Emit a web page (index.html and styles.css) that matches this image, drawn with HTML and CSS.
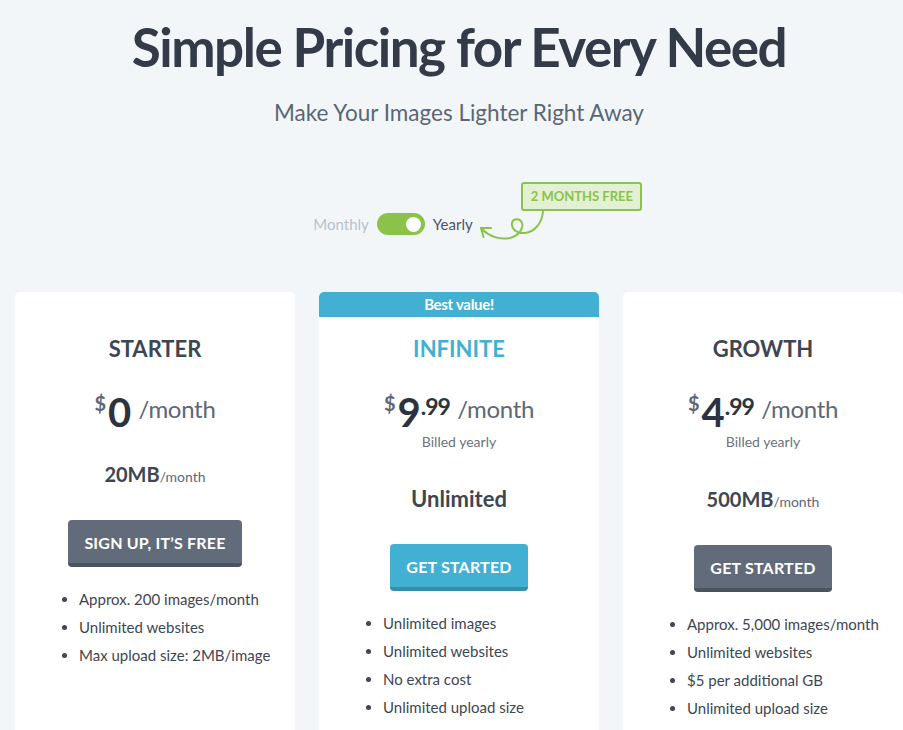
FILE: index.html
```html
<!DOCTYPE html>
<html lang="en">
<head>
<meta charset="utf-8">
<title>Pricing</title>
<link rel="stylesheet" href="styles.css">
</head>
<body>
<header class="hero">
  <h1 class="title">Simple Pricing for Every Need</h1>
  <p class="subtitle">Make Your Images Lighter Right Away</p>
  <div class="billing">
    <div class="toggle">
      <span class="opt opt-off">Monthly</span>
      <span class="switch"><span class="knob"></span></span>
      <span class="opt opt-on">Yearly</span>
      <span class="promo">2 MONTHS FREE</span>
      <svg class="curl" width="74" height="34" viewBox="0 0 74 34" fill="none" stroke="#8bc34a" stroke-width="2" stroke-linecap="round" stroke-linejoin="round">
        <path d="M68,3 C67,16 59,24 50,25 C41,26 36,20 37,15 C38,10 45,10 47,15 C49,21 43,28 35,30 C26,32 14,29 6,20"/>
        <path d="M6,20 L16,20 M6,20 L8.5,29"/>
      </svg>
    </div>
  </div>
</header>

<main class="plans">
  <section class="card">
    <h2 class="plan">STARTER</h2>
    <div class="price"><span class="cur">$</span><span class="num">0</span> <span class="per">/month</span></div>
    <div class="quota"><span class="amt">20MB</span><span class="unit">/month</span></div>
    <a class="btn btn-gray">SIGN UP, IT’S FREE</a>
    <ul class="features">
      <li>Approx. 200 images/month</li>
      <li>Unlimited websites</li>
      <li>Max upload size: 2MB/image</li>
    </ul>
  </section>

  <section class="card card-featured">
    <div class="ribbon">Best value!</div>
    <h2 class="plan plan-blue">INFINITE</h2>
    <div class="price"><span class="cur">$</span><span class="num">9</span><span class="cents">.99</span> <span class="per">/month</span></div>
    <div class="billed">Billed yearly</div>
    <div class="quota"><span class="amt amt-lg">Unlimited</span></div>
    <a class="btn btn-blue">GET STARTED</a>
    <ul class="features">
      <li>Unlimited images</li>
      <li>Unlimited websites</li>
      <li>No extra cost</li>
      <li>Unlimited upload size</li>
    </ul>
  </section>

  <section class="card">
    <h2 class="plan">GROWTH</h2>
    <div class="price"><span class="cur">$</span><span class="num">4</span><span class="cents">.99</span> <span class="per">/month</span></div>
    <div class="billed">Billed yearly</div>
    <div class="quota"><span class="amt">500MB</span><span class="unit">/month</span></div>
    <a class="btn btn-gray">GET STARTED</a>
    <ul class="features">
      <li>Approx. 5,000 images/month</li>
      <li>Unlimited websites</li>
      <li>$5 per additional GB</li>
      <li>Unlimited upload size</li>
    </ul>
  </section>
</main>
</body>
</html>
```

FILE: styles.css
```css
html {
  overflow: hidden;
}

body {
  margin: 0;
  background: #f3f6f9;
  font-family: "Lato", "Open Sans", sans-serif;
  color: #3e4654;
}

.hero {
  padding-top: 13px;
  padding-left: 15px;
  text-align: center;
}

.title {
  margin: 0;
  font-size: 53px;
  line-height: 68px;
  font-weight: 700;
  color: #333a48;
  letter-spacing: -1.5px;
}

.subtitle {
  margin: 17px 0 0;
  font-size: 22.5px;
  line-height: 30px;
  color: #5a6676;
}

.billing {
  display: flex;
  justify-content: center;
  padding-right: 132px;
  margin-top: 84px;
}

.toggle {
  position: relative;
  display: flex;
  align-items: center;
  gap: 8px;
  height: 24px;
}

.opt {
  font-size: 15px;
  line-height: 24px;
}

.opt-off {
  color: #b9c2cc;
}

.opt-on {
  color: #4a5363;
}

.switch {
  display: flex;
  align-items: center;
  justify-content: flex-end;
  width: 48px;
  height: 22px;
  padding: 0 4px;
  box-sizing: border-box;
  border-radius: 11px;
  background: #8bc34a;
}

.knob {
  width: 15px;
  height: 15px;
  border-radius: 50%;
  background: #fff;
}

.promo {
  position: absolute;
  left: 208px;
  top: -30px;
  width: 121px;
  height: 29px;
  box-sizing: border-box;
  border: 2px solid #8bc34a;
  border-radius: 3px;
  background: #e3f0d4;
  color: #8bc34a;
  font-size: 13px;
  font-weight: 700;
  line-height: 25px;
  white-space: nowrap;
}

.curl {
  position: absolute;
  left: 162px;
  top: -4px;
}

.plans {
  display: grid;
  grid-template-columns: repeat(3, 280px);
  gap: 24px;
  padding-left: 15px;
  margin-top: 56px;
}

.card {
  background: #fff;
  border-radius: 5px;
  padding: 41px 0 60px;
  text-align: center;
}

.card-featured {
  padding-top: 0;
}

.ribbon {
  height: 25px;
  margin-bottom: 16px;
  border-radius: 5px 5px 0 0;
  background: #42b0d3;
  color: #fff;
  font-size: 15px;
  font-weight: 700;
  line-height: 25px;
  letter-spacing: -0.3px;
}

.plan {
  margin: 0;
  font-size: 22px;
  line-height: 32px;
  font-weight: 700;
  color: #3e4654;
}

.plan-blue {
  color: #42b0d3;
}

.price {
  margin-top: 27px;
  font-size: 40px;
  line-height: 40px;
  white-space: nowrap;
  word-spacing: -3px;
}

.price > span {
  line-height: 10px;
  word-spacing: 0;
}

.cur {
  font-size: 20px;
  font-weight: 700;
  color: #5e6777;
  vertical-align: 16px;
  margin-right: 2px;
}

.num {
  font-weight: 700;
  color: #2d3240;
}

.cents {
  font-size: 23px;
  font-weight: 700;
  color: #2d3240;
  vertical-align: 12px;
  letter-spacing: -1px;
}

.per {
  font-size: 24px;
  color: #5e6777;
  vertical-align: 9px;
  letter-spacing: -0.3px;
}

.billed {
  font-size: 14px;
  line-height: 20px;
  padding-bottom: 5px;
  color: #6b7380;
}

.quota {
  margin-top: 27px;
  line-height: 30px;
}

.amt {
  font-size: 20px;
  font-weight: 700;
  color: #3e4654;
}

.amt-lg {
  font-size: 22px;
}

.unit {
  font-size: 14px;
  color: #5e6777;
}

.btn {
  display: inline-block;
  margin-top: 28px;
  padding: 13px 16px 11px;
  border-bottom: 4px solid #4b535e;
  border-radius: 4px;
  background: #616b79;
  color: #fff;
  font-size: 16px;
  font-weight: 700;
  line-height: 19px;
  letter-spacing: 0.2px;
}

.btn-blue {
  background: #42b0d3;
  border-bottom-color: #358fab;
}

.features {
  margin: 18px 0 0;
  padding-left: 64px;
  text-align: left;
  font-size: 15px;
  line-height: 28px;
  color: #3e4654;
}
```
